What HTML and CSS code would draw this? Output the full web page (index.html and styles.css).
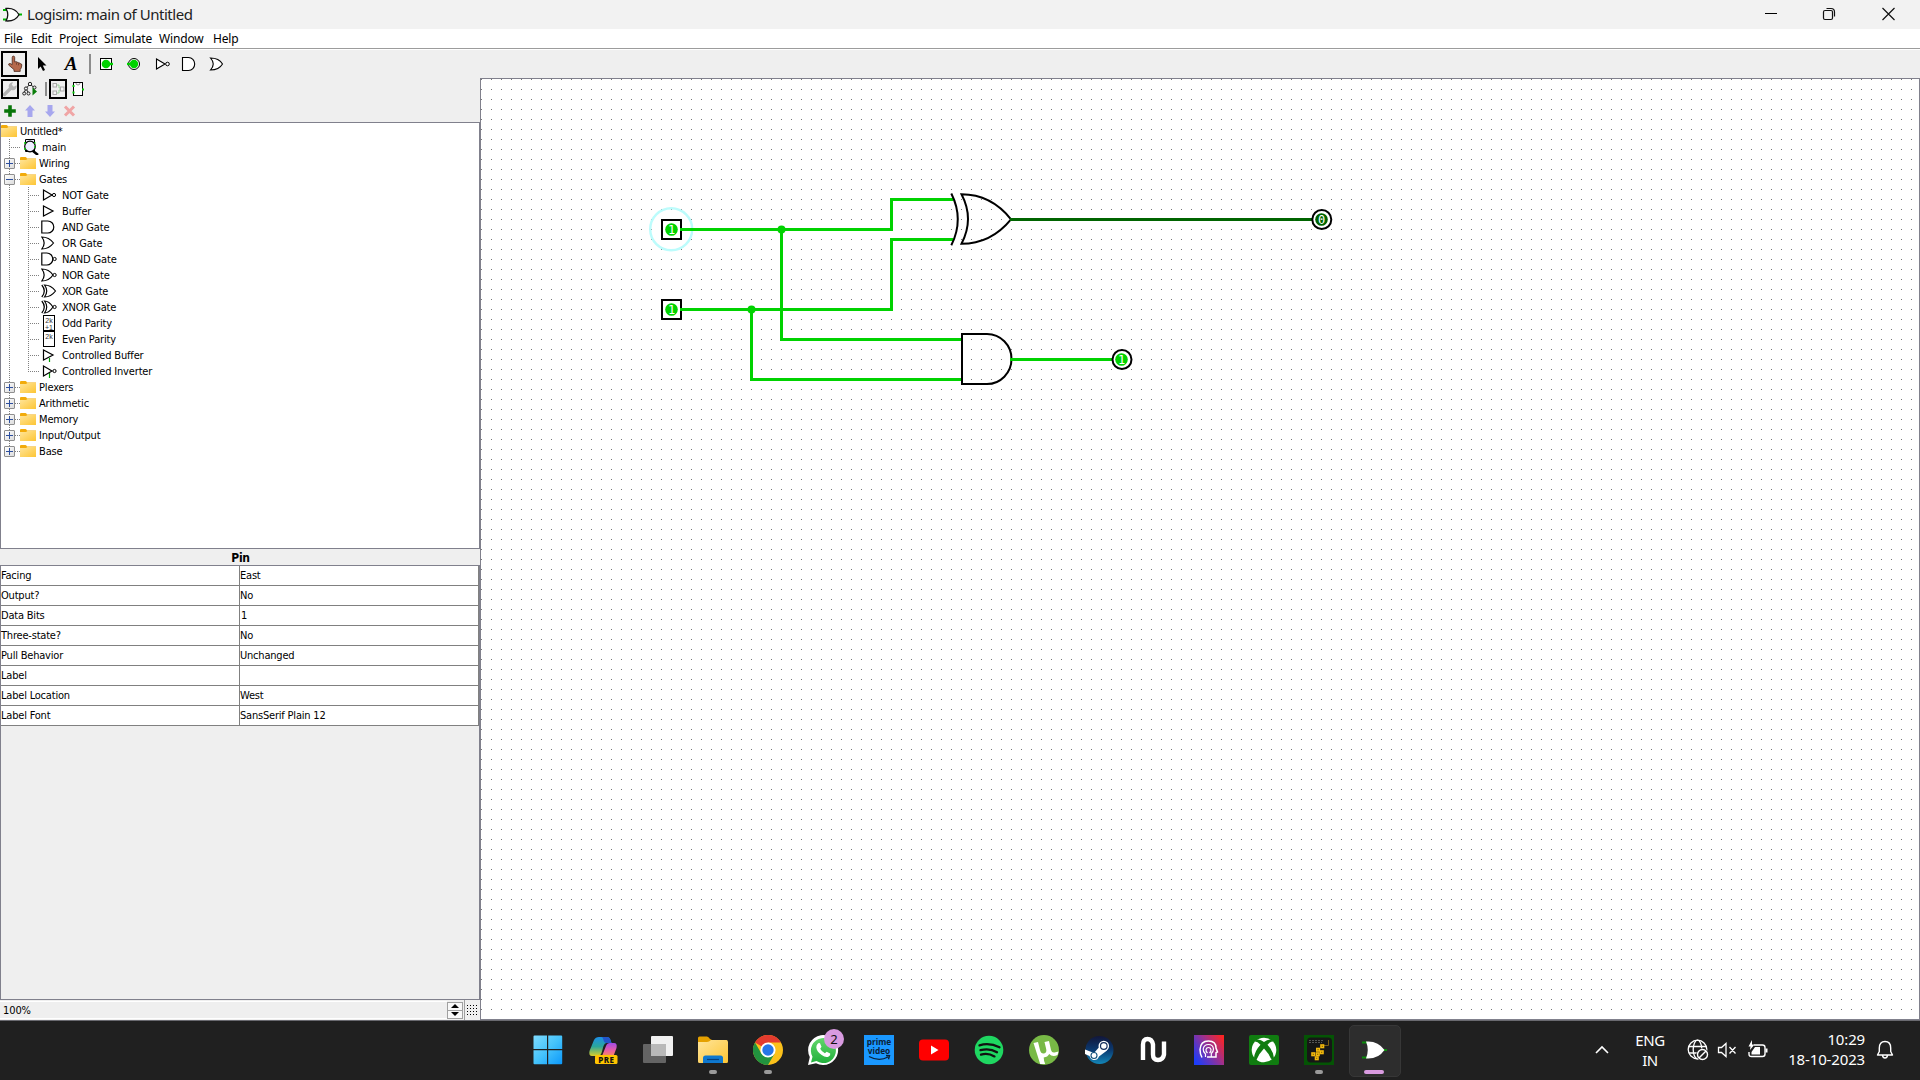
FILE: index.html
```html
<!DOCTYPE html>
<html lang="en">
<head>
<meta charset="utf-8">
<title>Logisim: main of Untitled</title>
<link rel="stylesheet" href="styles.css">
</head>
<body>
<svg class="defs" width="0" height="0">
  <defs>
    <linearGradient id="gFolder" x1="0" y1="0" x2="1" y2="1"><stop offset="0" stop-color="#ffe59a"/><stop offset="1" stop-color="#fdc534"/></linearGradient>
    <linearGradient id="gWin" x1="0" y1="0" x2="1" y2="1"><stop offset="0" stop-color="#7fdcff"/><stop offset=".5" stop-color="#45c3fb"/><stop offset="1" stop-color="#0c98fb"/></linearGradient>
    <linearGradient id="gCopA" x1="0" y1="0" x2="0" y2="1"><stop offset="0" stop-color="#1d8fe8"/><stop offset=".5" stop-color="#2aa79b"/><stop offset="1" stop-color="#d9cf2a"/></linearGradient>
    <linearGradient id="gCopB" x1="0" y1="0" x2="0" y2="1"><stop offset="0" stop-color="#a14be8"/><stop offset=".6" stop-color="#ec5fa0"/><stop offset="1" stop-color="#f88a5c"/></linearGradient>
    <linearGradient id="gSteam" x1="0" y1="0" x2="0" y2="1"><stop offset="0" stop-color="#12163a"/><stop offset=".5" stop-color="#0b3a70"/><stop offset="1" stop-color="#1387b8"/></linearGradient>
    <linearGradient id="gPsy" x1="0" y1=".8" x2="1" y2=".1"><stop offset="0" stop-color="#1d3dfa"/><stop offset=".55" stop-color="#9b3090"/><stop offset="1" stop-color="#ff2420"/></linearGradient>
    <linearGradient id="gWa" x1="0" y1="0" x2="0" y2="1"><stop offset="0" stop-color="#62d66b"/><stop offset="1" stop-color="#22b03c"/></linearGradient>
    <pattern id="grid" width="10" height="10" patternUnits="userSpaceOnUse"><rect x="1" y="9" width="1" height="1" fill="#777"/></pattern>

    <symbol id="folder" viewBox="0 0 16 14"><path d="M0 2q0-1 1-1h4.500q1 0 1.500 1.500H16V8H0z" fill="#f2ab0a"/><path d="M0 4h6l1.500-1H16v10H0z" fill="url(#gFolder)"/></symbol>
    <symbol id="main" viewBox="0 0 16 16"><path d="M2.500 .5h9v12h-9z" fill="#eef" stroke="#000"/><circle cx="7" cy="7.500" r="5.300" fill="#eef" stroke="#000" stroke-width="1.200"/><path d="M10 12l5 4" stroke="#000" stroke-width="2.500"/><path d="M1 4h2M1 10h2M11 4h1.500M11 8h1.500" stroke="#00c800" stroke-width="1.500"/></symbol>
    <symbol id="not" viewBox="0 0 16 16"><path d="M2.500 3v10L11 8z" fill="#fff" stroke="#000" stroke-width="1.200"/><circle cx="13" cy="8" r="1.600" fill="#fff" stroke="#000"/></symbol>
    <symbol id="buffer" viewBox="0 0 16 16"><path d="M2.500 3v10L12 8z" fill="#fff" stroke="#000" stroke-width="1.200"/></symbol>
    <symbol id="and" viewBox="0 0 16 16"><path d="M.8 2h6a6 6 0 0 1 0 12h-6z" fill="#fff" stroke="#000" stroke-width="1.200"/></symbol>
    <symbol id="or" viewBox="0 0 16 16"><path d="M.8 2Q8 2 12.500 8 8 14 .8 14 5.500 8 .8 2z" fill="#fff" stroke="#000" stroke-width="1.200"/></symbol>
    <symbol id="nand" viewBox="0 0 16 16"><path d="M.8 2h5a6 6 0 0 1 0 12h-5z" fill="#fff" stroke="#000" stroke-width="1.200"/><circle cx="13.600" cy="8" r="1.600" fill="#fff" stroke="#000"/></symbol>
    <symbol id="nor" viewBox="0 0 16 16"><path d="M.8 2Q8 2 12 8 8 14 .8 14 5.500 8 .8 2z" fill="#fff" stroke="#000" stroke-width="1.200"/><circle cx="13.600" cy="8" r="1.600" fill="#fff" stroke="#000"/></symbol>
    <symbol id="xor" viewBox="0 0 16 16"><path d="M3.500 2Q10 2 14.500 8 10 14 3.500 14 8 8 3.500 2z" fill="#fff" stroke="#000" stroke-width="1.200"/><path d="M.8 2q5 6 0 12" fill="none" stroke="#000" stroke-width="1.200"/></symbol>
    <symbol id="xnor" viewBox="0 0 16 16"><path d="M3.500 2Q8 2 12 8 8 14 3.500 14 8 8 3.500 2z" fill="#fff" stroke="#000" stroke-width="1.200"/><path d="M.8 2q5 6 0 12" fill="none" stroke="#000" stroke-width="1.200"/><circle cx="13.600" cy="8" r="1.600" fill="#fff" stroke="#000"/></symbol>
    <symbol id="cbuf" viewBox="0 0 16 16"><path d="M8.500 11v4" stroke="#00a000" stroke-width="1.200"/><path d="M2.500 3v10L12 8z" fill="#fff" stroke="#000" stroke-width="1.200"/></symbol>
    <symbol id="cinv" viewBox="0 0 16 16"><path d="M8.500 10v5" stroke="#00a000" stroke-width="1.200"/><path d="M2.500 3v10L11 8z" fill="#fff" stroke="#000" stroke-width="1.200"/><circle cx="13.500" cy="8" r="1.600" fill="#fff" stroke="#000"/></symbol>
  </defs>
</svg>

<div class="window">
  <header class="titlebar">
    <svg class="app-icon" width="20" height="20" viewBox="0 0 20 20"><path d="M1 5h5M1 14.500h5M16 9.500h4" stroke="#00b400" stroke-width="2"/><path d="M4 3.500q9-1 13 6.200-4 7-13 6.200 3.500-6.200 0-12.400z" fill="#fff" stroke="#111" stroke-width="1.300"/></svg>
    <h1 class="title">Logisim: main of Untitled</h1>
    <div class="window-buttons">
      <svg width="59" height="29" viewBox="0 0 59 29"><path d="M24 13.500h12" stroke="#000"/></svg>
      <svg width="59" height="29" viewBox="0 0 59 29"><path d="M26.500 8.500h4.500q3.500 0 3.500 3.500v4.500" fill="none" stroke="#111" stroke-width="1.200"/><rect x="23.500" y="10.500" width="9" height="9" rx="1.500" fill="none" stroke="#111" stroke-width="1.200"/></svg>
      <svg width="59" height="29" viewBox="0 0 59 29"><path d="M23.500 8l12 12M35.500 8l-12 12" stroke="#111" stroke-width="1.200"/></svg>
    </div>
  </header>
  <nav class="menubar"><span class="m-file">File</span><span class="m-edit">Edit</span><span class="m-project">Project</span><span class="m-sim">Simulate</span><span class="m-window">Window</span><span>Help</span></nav>

  <div class="toolbar">
    <span class="tool selected"><svg width="20" height="20" viewBox="0 0 20 20"><path d="M8.200 3.500q0-1.400 1.200-1.400t1.300 1.400V8l1-.3q1.100-.3 1.400.6 1.200-.4 1.700.6 1.200-.2 1.700.9 1.300-.1 1.300 1.200 0 2.800-1.600 4.600v1.800H10v-1.800L4.600 11q-.2-1.800 1.800-1.400l1.800 1z" fill="#b5694c" stroke="#4a2a1e" stroke-width=".8"/><path d="M12.500 8.500v2.200M14.500 9.300v2" stroke="#4a2a1e" stroke-width=".6"/></svg></span>
    <span class="tool"><svg width="20" height="20" viewBox="0 0 20 20"><path d="M6 3v12l2.700-2.600L11 17l2-.9-2.200-4.500h3.700z" fill="#000"/></svg></span>
    <span class="tool text-tool">A</span>
    <span class="sep"></span>
    <span class="tool"><svg width="20" height="20" viewBox="0 0 20 20"><rect x="4.500" y="4.500" width="11" height="11" fill="#fff" stroke="#000"/><circle cx="10" cy="10" r="4.300" fill="#00d200"/><path d="M13 10h4" stroke="#00d200" stroke-width="2.400"/></svg></span>
    <span class="tool"><svg width="20" height="20" viewBox="0 0 20 20"><circle cx="10" cy="10" r="5.500" fill="#fff" stroke="#000"/><circle cx="10" cy="10" r="4.200" fill="#00d200"/><path d="M3 10h4" stroke="#00d200" stroke-width="2.400"/></svg></span>
    <span class="tool"><svg width="20" height="20" viewBox="0 0 20 20"><path d="M4.500 5v10L13 10z" fill="#fff" stroke="#000" stroke-width="1.100"/><circle cx="15.500" cy="10" r="1.800" fill="#fff" stroke="#000"/></svg></span>
    <span class="tool"><svg width="20" height="20" viewBox="0 0 20 20"><path d="M2.500 3.500h6a6.200 6.500 0 0 1 0 13h-6z" fill="#fff" stroke="#000" stroke-width="1.100"/></svg></span>
    <span class="tool"><svg width="20" height="20" viewBox="0 0 20 20"><path d="M2.500 4Q11 4 14.500 10 11 16 2.500 16 8 10 2.500 4z" fill="#fff" stroke="#000" stroke-width="1.100"/></svg></span>
  </div>

  <main class="workspace">
    <aside class="sidebar">
      <div class="mini-bar">
        <span class="mini boxed"><svg width="16" height="16" viewBox="0 0 16 16"><path d="M2.500 13.500L9 7" stroke="#b4b4b4" stroke-width="3.200" stroke-linecap="round"/><path d="M14.500 4.200A4 4 0 1 1 11 1.300L9.800 3.800l2 2z" fill="#b4b4b4"/></svg></span>
        <span class="mini"><svg width="16" height="16" viewBox="0 0 16 16"><path d="M8 3L4 7.500l-2 4.500M4 7.500L6.500 12M8 3l4.500 4" stroke="#222" fill="none"/><g fill="#efefef" stroke="#222"><circle cx="8" cy="3" r="1.700"/><circle cx="4" cy="7.500" r="1.600"/><circle cx="2.200" cy="12.500" r="1.500"/><circle cx="6.500" cy="12.500" r="1.500"/><circle cx="12.500" cy="6.500" r="1.500"/></g><path d="M10.500 6.500v8l4.500-4z" fill="#087d08"/></svg></span>
        <span class="mini-sep"></span>
        <span class="mini boxed circuits"><svg width="14" height="16" viewBox="0 0 14 16"><path d="M5 4h3v3h2M5 12h3V9h2" fill="none" stroke="#9ad09a"/><g fill="#f4f4f4" stroke="#aaa"><rect x="2" y="2.500" width="3.500" height="3.500"/><rect x="2" y="10" width="3.500" height="3.500"/><rect x="9.500" y="6" width="3.500" height="4"/></g></svg></span>
        <span class="mini page"><svg width="16" height="16" viewBox="0 0 16 16"><rect x="3.500" y="1.500" width="9" height="13" fill="#fff" stroke="#000"/><path d="M6 2q0 2 2 2t2-2" fill="none" stroke="#999"/><path d="M2.500 5h2M2.500 11.500h2M12 8.500h2" stroke="#00c800" stroke-width="1.800"/></svg></span>
      </div>
      <div class="mini-bar edit-bar">
        <span class="mini"><svg width="14" height="14" viewBox="0 0 14 14"><path d="M7 1.200v11.600M1.200 7h11.600" stroke="#087508" stroke-width="3.600"/></svg></span>
        <span class="mini"><svg width="14" height="14" viewBox="0 0 14 14"><path d="M7 1l5 5.500H9.500V13h-5V6.500H2z" fill="#a7a7ee"/></svg></span>
        <span class="mini"><svg width="14" height="14" viewBox="0 0 14 14"><path d="M7 13l5-5.500H9.500V1h-5v6.500H2z" fill="#a7a7ee"/></svg></span>
        <span class="mini"><svg width="14" height="14" viewBox="0 0 14 14"><path d="M2 2.500l9 9M11 2.500l-9 9" stroke="#f0a5a5" stroke-width="3"/></svg></span>
      </div>

      <div class="tree">
        <div class="row root"><svg class="fold"><use href="#folder"/></svg><span>Untitled*</span></div>
        <div class="row"><i class="guide joint"></i><svg class="ico main-ico"><use href="#main"/></svg><span class="main-label">main</span></div>
        <div class="row"><i class="guide joint"><b class="knob plus"></b></i><svg class="fold"><use href="#folder"/></svg><span>Wiring</span></div>
        <div class="row"><i class="guide joint"><b class="knob"></b></i><svg class="fold"><use href="#folder"/></svg><span>Gates</span></div>
        <div class="row leaf"><i class="guide"></i><i class="guide joint"></i><svg class="ico"><use href="#not"/></svg><span>NOT Gate</span></div>
        <div class="row leaf"><i class="guide"></i><i class="guide joint"></i><svg class="ico"><use href="#buffer"/></svg><span>Buffer</span></div>
        <div class="row leaf"><i class="guide"></i><i class="guide joint"></i><svg class="ico"><use href="#and"/></svg><span>AND Gate</span></div>
        <div class="row leaf"><i class="guide"></i><i class="guide joint"></i><svg class="ico"><use href="#or"/></svg><span>OR Gate</span></div>
        <div class="row leaf"><i class="guide"></i><i class="guide joint"></i><svg class="ico"><use href="#nand"/></svg><span>NAND Gate</span></div>
        <div class="row leaf"><i class="guide"></i><i class="guide joint"></i><svg class="ico"><use href="#nor"/></svg><span>NOR Gate</span></div>
        <div class="row leaf"><i class="guide"></i><i class="guide joint"></i><svg class="ico"><use href="#xor"/></svg><span>XOR Gate</span></div>
        <div class="row leaf"><i class="guide"></i><i class="guide joint"></i><svg class="ico"><use href="#xnor"/></svg><span>XNOR Gate</span></div>
        <div class="row leaf"><i class="guide"></i><i class="guide joint"></i><svg class="ico" viewBox="0 0 16 16"><rect x="2.500" y=".5" width="11" height="15" fill="#fff" stroke="#000"/><text x="8" y="7.500" class="parity">2k</text><text x="8" y="14.500" class="parity">+1</text></svg><span>Odd Parity</span></div>
        <div class="row leaf"><i class="guide"></i><i class="guide joint"></i><svg class="ico" viewBox="0 0 16 16"><rect x="2.500" y=".5" width="11" height="15" fill="#fff" stroke="#000"/><text x="8" y="7.500" class="parity">2k</text></svg><span>Even Parity</span></div>
        <div class="row leaf"><i class="guide"></i><i class="guide joint"></i><svg class="ico"><use href="#cbuf"/></svg><span>Controlled Buffer</span></div>
        <div class="row leaf"><i class="guide"></i><i class="guide joint end"></i><svg class="ico"><use href="#cinv"/></svg><span>Controlled Inverter</span></div>
        <div class="row"><i class="guide joint"><b class="knob plus"></b></i><svg class="fold"><use href="#folder"/></svg><span>Plexers</span></div>
        <div class="row"><i class="guide joint"><b class="knob plus"></b></i><svg class="fold"><use href="#folder"/></svg><span>Arithmetic</span></div>
        <div class="row"><i class="guide joint"><b class="knob plus"></b></i><svg class="fold"><use href="#folder"/></svg><span>Memory</span></div>
        <div class="row"><i class="guide joint"><b class="knob plus"></b></i><svg class="fold"><use href="#folder"/></svg><span>Input/Output</span></div>
        <div class="row"><i class="guide joint end"><b class="knob plus"></b></i><svg class="fold"><use href="#folder"/></svg><span>Base</span></div>
      </div>

      <h2 class="attr-title">Pin</h2>
      <div class="attrs">
        <div class="attr"><span>Facing</span><span>East</span></div>
        <div class="attr"><span>Output?</span><span>No</span></div>
        <div class="attr"><span>Data Bits</span><span class="num">1</span></div>
        <div class="attr"><span>Three-state?</span><span>No</span></div>
        <div class="attr"><span>Pull Behavior</span><span>Unchanged</span></div>
        <div class="attr"><span>Label</span><span></span></div>
        <div class="attr"><span>Label Location</span><span>West</span></div>
        <div class="attr"><span>Label Font</span><span>SansSerif Plain 12</span></div>
      </div>

      <div class="zoombar">
        <span class="zoom-value">100%</span>
        <span class="stepper"><i><svg width="8" height="4" viewBox="0 0 8 4"><path d="M0 4l4-4 4 4z"/></svg></i><i><svg width="8" height="4" viewBox="0 0 8 4"><path d="M0 0l4 4 4-4z"/></svg></i></span>
        <span class="grid-toggle"></span>
      </div>
    </aside>

    <svg class="canvas" width="1438" height="940" viewBox="481 79 1438 940">
      <rect x="480" y="70" width="1440" height="950" fill="url(#grid)"/>
      <circle cx="671.200" cy="229.200" r="21" fill="none" stroke="#bcfcfc" stroke-width="2.400"/>
      <g fill="none" stroke="#00d200" stroke-width="3" stroke-linecap="square">
        <path d="M682 229.500H891.500V199.500H952"/>
        <path d="M682 309.500H891.500V239.500H952"/>
        <path d="M781.500 229.500V339.500H961"/>
        <path d="M751.500 309.500V379.500H961"/>
        <path d="M1012 359.500H1111"/>
        <path d="M1012 219.500H1311" stroke="#006400"/>
      </g>
      <circle cx="781.500" cy="229.500" r="4" fill="#00d200"/>
      <circle cx="751.500" cy="309.500" r="4" fill="#00d200"/>
      <g fill="none" stroke="#000" stroke-width="2">
        <path d="M961.500 194.300Q991 194.300 1011 219.300 991 243.700 961.500 243.700 974.500 219 961.500 194.300z"/>
        <path d="M951.300 193.500Q964.300 219.300 951.300 245.300"/>
        <path d="M962 334h25a24.500 25 0 0 1 0 50h-25z"/>
        <rect x="662" y="220" width="19" height="19"/>
        <rect x="662" y="300" width="19" height="19"/>
        <circle cx="1321.800" cy="219.500" r="9.500"/>
        <circle cx="1122" cy="359.500" r="9.500"/>
      </g>
      <path d="M1010 219.500h4" stroke="#006400" stroke-width="3"/>
      <g fill="#00d200">
        <rect x="1010" y="358" width="4" height="3"/><rect x="680" y="228" width="3" height="3"/><rect x="680" y="308" width="3" height="3"/>
        <circle cx="671.500" cy="229.500" r="6.300"/><circle cx="671.500" cy="309.500" r="6.300"/><circle cx="1121.500" cy="359.500" r="6.300"/>
      </g>
      <circle cx="1321.500" cy="219.500" r="6.300" fill="#006400"/>
      <g class="bit"><text x="671.500" y="234">1</text><text x="671.500" y="314">1</text><text x="1121.500" y="364">1</text><text x="1321.500" y="224">0</text></g>
    </svg>
  </main>
</div>

<footer class="taskbar">
  <div class="apps">
    <span class="app"><svg width="30" height="30" viewBox="0 0 30 30"><path d="M.5 1.500q0-1 1-1H14V14H.5zM15.200.5h13q1 0 1 1V14h-14zM.5 15.200H14v14H1.500q-1 0-1-1zM15.200 15.200h14v13q0 1-1 1h-13z" fill="url(#gWin)"/></svg></span>
    <span class="app"><svg width="30" height="30" viewBox="0 0 30 30"><path d="M6 5Q7.500 2 11 2h8q2.500 0 3.500 3l1 3h-5q-2 0-3 3l-2 7q-1 3-4 3H4q-3.500 0-2.500-5z" fill="url(#gCopA)"/><path d="M14 2h5q2.500 0 3.500 3l1 3h-5q-2.500 0-3-3t-2-3z" fill="#2355c9"/><path d="M18 11q1-3 4-3h4q3.500 0 2.500 5l-3 8H14z" fill="url(#gCopB)"/><rect x="7" y="20" width="22.500" height="9" rx="1.500" fill="#ffc400"/><text x="18.300" y="27.500" class="pre">PRE</text></svg></span>
    <span class="app"><svg width="32" height="30" viewBox="0 0 32 30"><rect x="9" y="1" width="22" height="20" rx="1" fill="#f1f1f1"/><rect x="1" y="9" width="23" height="19" rx="1" fill="#6b6b6b" opacity=".9"/><path d="M9 9h15v12H9z" fill="#b9b9b9"/></svg></span>
    <span class="app run"><svg width="32" height="30" viewBox="0 0 32 30"><path d="M1 3q0-1.500 1.500-1.500H10q1.500 0 3 2.500l2 1H30v8H1z" fill="#e5a100"/><path d="M1 7h9q2 0 4-2h15q2 0 2 2v19.500q0 1.500-1.500 1.500h-27Q1 28 1 26.500z" fill="url(#gFolder)"/><path d="M6 28v-5q0-2.500 2.500-2.500h15q2.500 0 2.500 2.500v5z" fill="#0f78cf"/><path d="M10 24.500h12" stroke="#063f7d" stroke-width="1.200"/></svg></span>
    <span class="app run"><svg width="30" height="30" viewBox="0 0 30 30"><circle cx="15" cy="15" r="15" fill="#fbc11b"/><path d="M15 15L2 7.500A15 15 0 0 1 28 7.500H15z" fill="#e33b2e"/><path d="M2 7.500A15 15 0 0 0 15 30l6.500-11.200L15 22 8.500 18.800z" fill="#22933f"/><circle cx="15" cy="15" r="7.600" fill="#fff"/><circle cx="15" cy="15" r="5.700" fill="#2676e8"/></svg></span>
    <span class="app"><svg width="36" height="36" viewBox="0 0 36 36"><path d="M3 33l1.800-8A15 15 0 1 1 11 31.300z" fill="#fff"/><path d="M6 30.500l1.500-5.800A12.500 12.500 0 1 1 11.500 29z" fill="url(#gWa)"/><path d="M12.500 12q1-1.500 2.500-.8l1.500 3.500-1.300 2q1.500 3 4.700 4.500l1.800-1.500 3.500 1.700q.5 1.800-1.500 3-3 1.500-7-1.500-5-3.500-5.400-7.500 0-2 1.200-3.400z" fill="#fff"/></svg><em class="badge">2</em></span>
    <span class="app"><svg width="30" height="30" viewBox="0 0 30 30"><path d="M0 0h30v30H0z" fill="#1a98ff"/><text x="15" y="10" class="prime">prime</text><text x="15" y="19" class="prime">video</text><path d="M5 21.500q10 5.500 19 .5M22 20.500l3.500.2-1 3.500" fill="none" stroke="#0b2239" stroke-width="1.400"/></svg></span>
    <span class="app"><svg width="30" height="22" viewBox="0 0 30 22"><rect y=".5" width="30" height="21" rx="4" fill="#f00"/><path d="M12 6.500v9l7.500-4.500z" fill="#fff"/></svg></span>
    <span class="app"><svg width="30" height="30" viewBox="0 0 30 30"><circle cx="15" cy="15" r="14.300" fill="#1fd761"/><path d="M5.500 10.300q10-3 20 2M6.500 15.200q9-2.500 16.500 2M7 19.600q7-2 13.500 1.800" fill="none" stroke="#111" stroke-width="2.300" stroke-linecap="round"/></svg></span>
    <span class="app"><svg width="32" height="30" viewBox="0 0 32 30"><circle cx="16" cy="15" r="15" fill="#78b946"/><path d="M5.500 8l4.500-1 2 8q1 4 4 3.500 3-.7 2.200-4.500L16.500 7l4.500-1 2 9q.8 3 3.500 2.500l4-1-1 3.500q-5 2.500-8.300-1-1.500 3-5.500 3.500 0 3 1.500 6.500h-5z" fill="#fff"/></svg></span>
    <span class="app"><svg width="30" height="30" viewBox="0 0 30 30"><circle cx="15.500" cy="15" r="14" fill="url(#gSteam)"/><path d="M1 14.500l9 3.500 7-8 6 5.500-8 6q-1.500 4-5.500 3.500-3-.5-4-4l-4.500-2z" fill="#fff"/><circle cx="19.800" cy="11" r="5.300" fill="#fff"/><circle cx="19.800" cy="11" r="3.300" fill="none" stroke="#17315e" stroke-width="1.200"/><circle cx="10" cy="20.500" r="3" fill="none" stroke="#17547e" stroke-width="1.100"/></svg></span>
    <span class="app"><svg width="30" height="30" viewBox="0 0 30 30"><path d="M4 25V9.500Q4 4 8.500 4t5.500 5.500v10q0 5.500 5 5.500t6-5.500V6.500" fill="none" stroke="#fff" stroke-width="4.400" stroke-linejoin="round"/></svg></span>
    <span class="app"><svg width="30" height="30" viewBox="0 0 30 30"><path d="M0 0h30v30H0z" fill="url(#gPsy)"/><path d="M8 22.500Q6 19 6 14.500 6.500 6 14.500 6q7.500 0 7.500 7l1.500 4-1.500.8V22h-9" fill="none" stroke="#fff" stroke-width="1.500"/><path d="M11.500 22v-3Q9 17 9.200 14q.8-4.500 5.300-4.500t5 4.500q0 2.500-2.200 4.500V22M13.500 18q-1.800-1.800-1.500-3.500.6-2 2.500-2t2.500 2q.3 1.700-1.500 3.500" fill="none" stroke="#fff" stroke-width="1.200"/></svg></span>
    <span class="app"><svg width="30" height="30" viewBox="0 0 30 30"><rect width="30" height="30" rx="2" fill="#107c10"/><circle cx="15" cy="15" r="12.300" fill="#fff"/><path d="M8 4.500q3.500-.5 7 2.500 3.500-3 7-2.500l2.500 2q-3-.5-6 3.200 6 6.500 6.500 13.500l-2 2.500Q20.500 19 15 13.500 9.500 19 7 25.700l-2-2.500Q5.500 16 11.500 9.700 8 6 5.500 6.500z" fill="#107c10"/></svg></span>
    <span class="app run"><svg width="30" height="30" viewBox="0 0 30 30"><path d="M0 0h30v30H0z" fill="#045404"/><rect x="3" y="2.500" width="25" height="25" rx="4" fill="#161616"/><path d="M5 5.500h15M5 7.500h13" stroke="#555" stroke-dasharray="2 1"/><path d="M24.500 5v5.500H19" fill="none" stroke="#7a5c12"/><g fill="#3a2b00" stroke="#f3b90c" stroke-width="1.600"><rect x="17" y="10" width="2.500" height="2.500"/><rect x="12.800" y="13.500" width="2.500" height="2.500"/><rect x="16.500" y="16" width="2.500" height="2.500"/><rect x="8" y="18" width="2.500" height="2.500"/><rect x="12.500" y="18" width="2.500" height="2.500"/><rect x="11.500" y="22" width="2.500" height="2.500"/></g></svg></span>
    <span class="app active"><svg width="30" height="30" viewBox="0 0 30 30"><path d="M3 7.500h5M3 22.500h5M24 15h4" stroke="#0a8a0a" stroke-width="1.800"/><path d="M7 6.500q12-1 18.500 8.500Q19 24.500 7 23.500q3.500-8.500 0-17z" fill="#fff"/></svg></span>
  </div>
  <div class="tray">
    <svg class="chev" width="16" height="16" viewBox="0 0 16 16"><path d="M2 11l6-6 6 6" fill="none" stroke="#fff" stroke-width="1.600"/></svg>
    <div class="lang"><span>ENG</span><span>IN</span></div>
    <svg class="net" width="22" height="22" viewBox="0 0 22 22"><g fill="none" stroke="#fff" stroke-width="1.300"><circle cx="10.500" cy="10.500" r="9.300"/><ellipse cx="10.500" cy="10.500" rx="4.300" ry="9.300"/><path d="M2 7.500h17M2 14h10"/></g><circle cx="15.500" cy="15.500" r="6.200" fill="#202020"/><path d="M19 12l-7 7" stroke="#fff" stroke-width="1.400"/><circle cx="15.500" cy="15.500" r="5" fill="none" stroke="#fff" stroke-width="1.400"/></svg>
    <svg class="vol" width="20" height="18" viewBox="0 0 20 18"><path d="M1.500 6.500h3L9 2.500v13l-4.500-4h-3zM12.500 6l6 6.500M18.500 6l-6 6.500" fill="none" stroke="#fff" stroke-width="1.300"/></svg>
    <svg class="bat" width="22" height="20" viewBox="0 0 22 20"><path d="M7 5h8.500q2.500 0 2.500 2.500v6.500q0 2.500-2.500 2.500h-11q-2.500 0-2.500-2.500V12" fill="none" stroke="#fff" stroke-width="1.400"/><path d="M18.500 8.500h2v4h-2z" fill="#fff"/><path d="M8 7h5v7.500H4.500V12zM5 0L1.500 6.500h2L3 10l4.500-5.500H5z" fill="#fff"/></svg>
    <div class="clock"><span class="time">10:29</span><span class="date">18-10-2023</span></div>
    <svg class="bell" width="18" height="20" viewBox="0 0 18 20"><path d="M1.500 15l1.800-3.500V8q0-6.500 5.700-6.500T14.700 8v3.500l1.800 3.500zM6.500 15.500q.5 2.500 2.500 2.500t2.500-2.500" fill="none" stroke="#fff" stroke-width="1.400" stroke-linejoin="round"/></svg>
  </div>
</footer>
</body>
</html>
```
FILE: styles.css
```css
* { box-sizing: border-box; }
body {
  margin: 0;
  width: 1920px;
  height: 1080px;
  overflow: hidden;
  display: flex;
  flex-direction: column;
  background: #efefef;
  color: #000;
  font: 11px/16px "DejaVu Sans Condensed", "DejaVu Sans", sans-serif;
}
svg { display: block; flex: none; }
i, em { font-style: normal; }
.defs { position: absolute; }
.window { height: 1021px; display: flex; flex-direction: column; border-bottom: 1px solid #6a6a70; }

.titlebar { height: 29px; flex: none; display: flex; align-items: center; background: #f2f2f2; }
.app-icon { margin-left: 2px; }
.title { margin: 0 0 0 5px; font: 400 15px/29px "Noto Sans", sans-serif; color: #222; white-space: nowrap; letter-spacing: -.47px; }
.window-buttons { margin-left: auto; display: flex; margin-right: 2px; }

.menubar { height: 20px; flex: none; display: flex; background: #fff; border-bottom: 1px solid #9c9c9c; padding-left: 4px; font: 12px/20px "Noto Sans", sans-serif; letter-spacing: -.15px; }
.menubar span { white-space: nowrap; }
.m-file { width: 27px; }
.m-edit { width: 28px; }
.m-project { width: 45px; }
.m-sim { width: 55px; }
.m-window { width: 54px; }

.toolbar { height: 29px; flex: none; display: flex; align-items: center; border-top: 1px solid #fff; }
.tool { width: 28px; height: 28px; display: flex; align-items: center; justify-content: center; }
.tool.selected { width: 26px; height: 26px; margin: 0 1px; border: 2px solid #000; }
.text-tool { padding-left: 2px; font: italic 700 19px/28px "Liberation Serif", serif; }
.sep { width: 2px; height: 20px; margin: 0 1px 0 5px; background: #8c8c8c; }

.workspace { flex: 1; display: flex; min-height: 0; }
.sidebar { width: 480px; flex: none; display: flex; flex-direction: column; }
.canvas { box-sizing: content-box; border: 1px solid #80808c; background: #fff; }

.mini-bar { height: 22px; flex: none; display: flex; align-items: center; }
.mini { width: 20px; height: 20px; display: flex; align-items: center; justify-content: center; }
.mini.boxed { width: 18px; height: 20px; border: 2px solid #000; margin: 0 1px; overflow: hidden; }
.mini.circuits { margin-left: 0; }
.mini-sep { width: 2px; height: 14px; margin: 0 2px 0 5px; background: #8c8c8c; }

.tree { height: 427px; flex: none; background: #fff; border: 1px solid #80808c; }
.row { height: 16px; display: flex; align-items: center; white-space: nowrap; letter-spacing: -.16px; }
.row span { padding-top: 1px; }
.fold { width: 16px; height: 14px; margin-right: 3px; }
.ico { width: 16px; height: 16px; margin-right: 5px; }
.leaf .guide + .guide { margin-right: 2px; }
.main-ico { margin-left: 3px; margin-right: 3px; }
.guide {
  width: 19px;
  height: 16px;
  flex: none;
  background: repeating-linear-gradient(to bottom, #808080 0 1px, transparent 1px 2px) 8px 0 / 1px 100% no-repeat;
}
.guide.joint {
  background:
    repeating-linear-gradient(to bottom, #808080 0 1px, transparent 1px 2px) 8px 0 / 1px 100% no-repeat,
    repeating-linear-gradient(to right, #808080 0 1px, transparent 1px 2px) 10px 8px / 9px 1px no-repeat;
}
.guide.joint.end { background-size: 1px 9px, 9px 1px; }
.knob {
  display: block;
  width: 11px;
  height: 11px;
  margin: 3px 0 0 3px;
  border: 1px solid #8f8f8f;
  border-radius: 1px;
  background: linear-gradient(#2d4f9e, #2d4f9e) 1px 4px / 7px 1px no-repeat, linear-gradient(135deg, #fff, #dcdcdc);
}
.knob.plus { background: linear-gradient(#2d4f9e, #2d4f9e) 1px 4px / 7px 1px no-repeat, linear-gradient(#2d4f9e, #2d4f9e) 4px 1px / 1px 7px no-repeat, linear-gradient(135deg, #fff, #dcdcdc); }
.parity { font: 7px "Liberation Sans", sans-serif; text-anchor: middle; fill: #333; letter-spacing: 0; }

.attr-title { height: 16px; flex: none; margin: 0; padding-left: 1px; text-align: center; font: 700 12px/18px "DejaVu Sans Condensed", sans-serif; letter-spacing: -.3px; }
.attrs { flex: 1; border: 1px solid #80808c; }
.attr { height: 20px; display: grid; grid-template-columns: 239px 239px; border-bottom: 1px solid #808080; background: #fff; line-height: 20px; letter-spacing: -.2px; white-space: nowrap; }
.attr span { height: 19px; border-right: 1px solid #808080; }
.attr .num { padding-left: 1px; }

.zoombar { height: 20px; flex: none; display: flex; align-items: center; }
.zoom-value { width: 447px; height: 18px; padding-left: 3px; line-height: 17px; border-top: 1px solid #fff; border-bottom: 1px solid #fff; letter-spacing: -.1px; }
.stepper { width: 16px; height: 17px; display: grid; grid-template-rows: 1fr 1fr; border: 1px solid #a0a0a0; background: #f8f8f8; }
.stepper i { display: flex; align-items: center; justify-content: center; }
.stepper i + i { border-top: 1px solid #a0a0a0; }
.grid-toggle { width: 16px; height: 20px; margin-left: auto; padding: 5px 2px 4px 2px; border-left: 1px solid #a0a0a0; background: conic-gradient(from 270deg at 1px 1px, #000 90deg, transparent 0) content-box 0 0 / 3px 3px; }
.bit text { font: 12px "DejaVu Sans Mono", monospace; fill: #fff; text-anchor: middle; }

.taskbar { height: 59px; flex: none; display: flex; background: #202020; color: #fff; }
.apps { margin-left: 520.4px; display: flex; height: 58px; }
.app { width: 55.1px; position: relative; display: flex; align-items: center; justify-content: center; }
.app.run::after, .app.active::after { content: ""; position: absolute; left: 50%; bottom: 5px; width: 8px; height: 4px; margin-left: -4px; border-radius: 2px; background: #9a9a9a; }
.app.active::after { width: 20px; margin-left: -10px; background: #d99be0; }
.app.active::before { content: ""; position: absolute; left: 2px; top: 4px; width: 50px; height: 50px; border: 1px solid #373737; border-radius: 5px; background: #2d2d2d; }
.app.active svg { position: relative; }
.badge { position: absolute; right: 7px; top: 8px; width: 20px; height: 20px; border-radius: 50%; background: #d99be0; color: #111; text-align: center; font: 13px/20px "Noto Sans", sans-serif; }
.pre { font: 800 8px "Noto Sans", sans-serif; text-anchor: middle; fill: #111; letter-spacing: .4px; }
.prime { font: 700 8.300px "Noto Sans", sans-serif; text-anchor: middle; fill: #0b2239; }

.tray { margin-left: auto; height: 58px; display: flex; align-items: center; padding-right: 26px; font: 15px/20px "Noto Sans", sans-serif; }
.lang { width: 40px; margin: 0 17px 0 20px; display: flex; flex-direction: column; align-items: center; letter-spacing: -.4px; }
.vol { margin: 0 10px 0 8px; }
.clock { width: 80px; margin: 0 11px 2px 16px; display: flex; flex-direction: column; align-items: flex-end; letter-spacing: -.15px; }
```
